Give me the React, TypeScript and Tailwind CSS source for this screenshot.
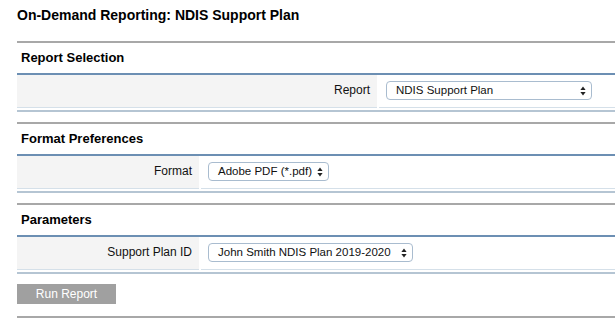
import React from "react";

function Arrows() {
  return (
    <svg width="6" height="10" viewBox="0 0 6 10" className="shrink-0">
      <path d="M3 0.5 L5.6 4 L0.4 4 Z" fill="#222" />
      <path d="M3 9.5 L5.6 6 L0.4 6 Z" fill="#222" />
    </svg>
  );
}

function Select({ value, width }: { value: string; width: string }) {
  return (
    <div
      className={`${width} h-[19px] flex items-center justify-between pl-[9px] pr-[5px] bg-white border border-[#a9bccf] rounded-[4px] text-[11.5px] text-[#111]`}
    >
      <span className="whitespace-nowrap">{value}</span>
      <Arrows />
    </div>
  );
}

function Section({
  title,
  label,
  labelWidth,
  children,
}: {
  title: string;
  label: string;
  labelWidth: string;
  children: React.ReactNode;
}) {
  return (
    <div className="flex flex-col">
      <div className="h-[2px] bg-[#a8a8a8]" />
      <div className="h-[30px] flex items-center pl-[4px] text-[13px] font-bold text-black">
        {title}
      </div>
      <div className="h-[2px] bg-[#6c8fb3]" />
      <div className="flex h-[33px]">
        <div
          className={`${labelWidth} shrink-0 bg-[#f4f4f4] border-b border-[#d5e0e9] flex items-center justify-end pr-[7px] pb-[3px] text-[12px] text-[#111]`}
        >
          {label}
        </div>
        <div className="flex-1 ml-[2px] border-b border-[#d5e0e9] flex items-center pl-[7px] pb-[1px]">
          {children}
        </div>
      </div>
      <div className="h-[2px] mt-[2px] bg-[#b5c5d3]" />
      <div className="h-[10px]" />
    </div>
  );
}

export default function App() {
  return (
    <div
      className="w-[615px] h-[318px] bg-white overflow-hidden pl-[17px]"
      style={{ fontFamily: '"Liberation Sans", Arial, sans-serif' }}
    >
      <div className="h-[41px] pt-[7px] text-[14px] leading-[16px] font-bold text-black whitespace-nowrap">
        On-Demand Reporting: NDIS Support Plan
      </div>
      <Section title="Report Selection" label="Report" labelWidth="w-[360px]">
        <Select value="NDIS Support Plan" width="w-[206px]" />
      </Section>
      <Section title="Format Preferences" label="Format" labelWidth="w-[182px]">
        <Select value="Adobe PDF (*.pdf)" width="w-[121px]" />
      </Section>
      <Section title="Parameters" label="Support Plan ID" labelWidth="w-[182px]">
        <Select value="John Smith NDIS Plan 2019-2020" width="w-[205px]" />
      </Section>
      <div className="h-[20px] w-[99px] bg-[#a0a0a0] text-white text-[12px] flex items-center justify-center">
        Run Report
      </div>
      <div className="h-[12px]" />
      <div className="h-[2px] bg-[#a8a8a8]" />
    </div>
  );
}
